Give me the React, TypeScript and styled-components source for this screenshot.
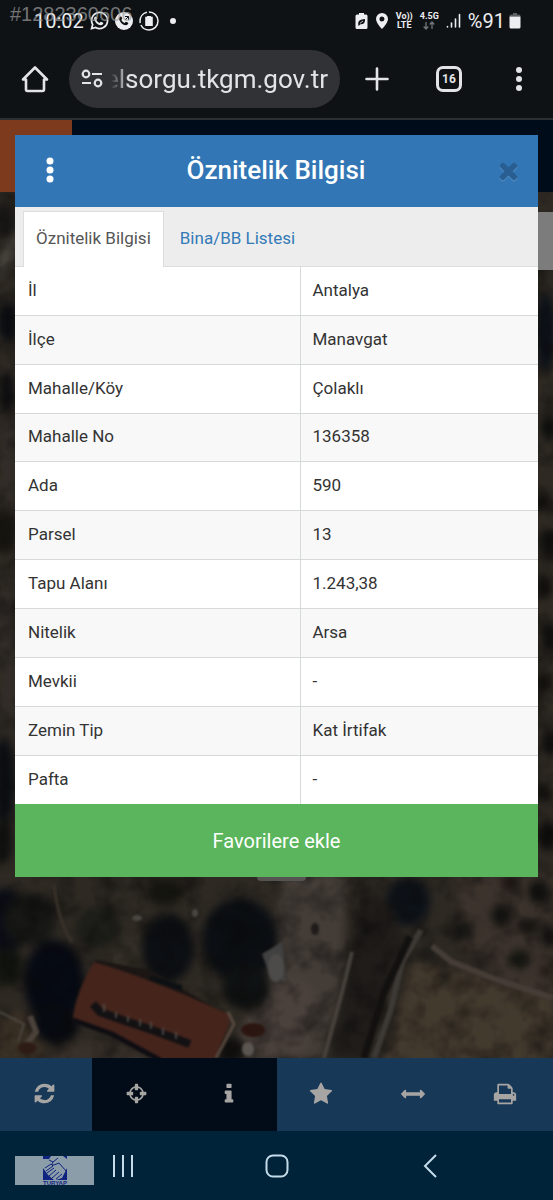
import React from "react";
import styled, { createGlobalStyle } from "styled-components";

const GlobalStyle = createGlobalStyle`
  *, *::before, *::after { box-sizing: border-box; }
  html, body { margin: 0; padding: 0; background: #0f1215; }
  body { font-family: Roboto, "Noto Sans", sans-serif; color: #333; }
  button { font: inherit; border: 0; margin: 0; padding: 0; background: none; color: inherit; cursor: pointer; }
  svg { display: block; flex: none; }
`;

const Screen = styled.div`
  display: flex;
  flex-direction: column;
  min-height: 100vh;
  position: relative;
`;

/* ---------- Phone status bar ---------- */

const StatusBar = styled.header`
  display: flex;
  align-items: center;
  justify-content: space-between;
  height: 42px;
  padding: 0 32px 0 34px;
  background: #0f1215;
  color: #eceef0;
`;

const StatusGroup = styled.div<{ $gap: number }>`
  display: flex;
  align-items: center;
  gap: ${(p) => p.$gap}px;
`;

const StatusText = styled.span`
  font-size: 20px;
  line-height: 24px;
`;

const Dot = styled.span`
  width: 6px;
  height: 6px;
  margin-left: 6px;
  border-radius: 50%;
  background: #eceef0;
`;

const NetLabel = styled.span`
  display: flex;
  flex-direction: column;
  align-items: center;
  font-size: 9px;
  line-height: 9px;
  font-weight: 700;
`;

const ListingNumber = styled.span`
  position: absolute;
  left: 10px;
  top: 3px;
  font-family: "Liberation Sans", Arial, sans-serif;
  font-size: 20px;
  line-height: 22px;
  color: rgba(160, 160, 160, 0.7);
`;

/* ---------- Browser bar ---------- */

const BrowserBar = styled.div`
  display: flex;
  align-items: center;
  height: 78px;
  padding-bottom: 2px;
  background: #0f1215;
  border-bottom: 2px solid #2b2f33;
  color: #e3e4e8;
`;

const BarButton = styled.button<{ $w: number }>`
  display: flex;
  align-items: center;
  justify-content: center;
  flex: none;
  width: ${(p) => p.$w}px;
  height: 58px;
`;

const AddressPill = styled.label`
  display: flex;
  align-items: center;
  flex: 1;
  min-width: 0;
  height: 58px;
  padding: 0 12px;
  gap: 8px;
  border-radius: 29px;
  background: #313236;
`;

const AddressInput = styled.input`
  flex: 1;
  min-width: 0;
  height: 40px;
  padding: 0;
  border: 0;
  outline: 0;
  background: none;
  color: #e3e4e8;
  font: 400 26px/32px Roboto, sans-serif;
  direction: rtl;
  mask-image: linear-gradient(to right, transparent, #000 18px);
`;

const TabCount = styled.span`
  display: flex;
  align-items: center;
  justify-content: center;
  width: 26px;
  height: 26px;
  border: 3px solid #e3e4e8;
  border-radius: 7px;
  font-size: 12px;
  line-height: 14px;
  font-weight: 700;
`;

/* ---------- Web page with dialog on top ---------- */

const WebView = styled.main`
  display: grid;
  flex: 1;
  grid-template-columns: minmax(0, 1fr);
`;

const PageLayer = styled.div`
  grid-area: 1 / 1;
  display: flex;
  flex-direction: column;
`;

const DialogLayer = styled.div`
  grid-area: 1 / 1;
  align-self: start;
  padding: 15px;
  z-index: 1;
`;

const SiteHeader = styled.div`
  height: 72px;
  background: linear-gradient(to right, #7d3a1c 72px, #010c1a 72px);
`;

const MapSvg = styled.svg`
  flex: 1 1 0;
  width: 100%;
  height: 0;
  min-height: 0;
`;

const MapToolbar = styled.nav`
  display: flex;
  height: 73px;
`;

const ToolButton = styled.button<{ $dark?: boolean }>`
  display: flex;
  align-items: center;
  justify-content: center;
  flex: 1;
  padding: 0 3px 2px 0;
  background: ${(p) => (p.$dark ? "#010c18" : "#183858")};
  color: #a6a5a3;
`;

/* ---------- Dialog ---------- */

const Dialog = styled.section`
  display: flex;
  flex-direction: column;
  background: #fff;
`;

const DialogHeader = styled.div`
  display: flex;
  align-items: center;
  justify-content: space-between;
  height: 72px;
  padding: 0 12px 2px 11px;
  background: #3276b5;
  color: #fff;
`;

const DialogTitle = styled.h1`
  margin: 0;
  font-size: 26px;
  line-height: 32px;
  font-weight: 500;
`;

const HeaderButton = styled.button`
  display: flex;
  align-items: center;
  justify-content: center;
  width: 48px;
  height: 48px;
`;

const CloseButton = styled(HeaderButton)`
  padding-left: 12px;
  color: #285e91;
  filter: drop-shadow(0 1px 0 #5c93c7);
`;

const Tabs = styled.div`
  display: flex;
  height: 60px;
  padding: 4px 8px 0;
  gap: 3px;
  background: #ededed;
  border-bottom: 1px solid #ddd;
`;

const Tab = styled.button<{ $active?: boolean }>`
  height: 56px;
  padding: 0 12px 3px;
  font-size: 17px;
  line-height: 24px;
  color: ${(p) => (p.$active ? "#555" : "#337ab7")};
  background: ${(p) => (p.$active ? "#fff" : "transparent")};
  border: 1px solid ${(p) => (p.$active ? "#ddd" : "transparent")};
  border-bottom: 0;
`;

const InfoTable = styled.table`
  width: 100%;
  height: 537px;
  table-layout: fixed;
  border-collapse: collapse;
  font-size: 17px;
  line-height: 24px;
`;

const InfoRow = styled.tr`
  &:nth-child(even) { background: #f8f8f8; }
  & + & > * { border-top: 1px solid #d5d9da; }
`;

const LabelCell = styled.th`
  width: 285px;
  padding: 0 12px 2px 13px;
  border-right: 1px solid #d5d9da;
  font-weight: 400;
  text-align: left;
`;

const ValueCell = styled.td`
  padding: 0 12px 2px;
`;

const FavouriteButton = styled.button`
  height: 73px;
  background: #5ab55c;
  color: #fff;
  font-size: 20px;
  line-height: 24px;
`;

/* ---------- Phone navigation ---------- */

const PhoneNav = styled.nav`
  display: flex;
  height: 69px;
  padding: 0 46px;
  background: #00233a;
`;

const NavButton = styled.button`
  display: flex;
  align-items: center;
  justify-content: center;
  flex: 1;
  color: #c4dcea;
`;

const BrandBadge = styled.div`
  position: absolute;
  left: 15px;
  bottom: 15px;
  width: 79px;
  height: 29px;
  display: flex;
  justify-content: center;
  background: #8b9da8;
`;

const Glyph = ({ d, size }: { d: string; size: number }) => (
  <svg width={size} height={size} viewBox="0 0 1792 1792" fill="currentColor" aria-hidden="true">
    <path d={d} />
  </svg>
);

const icons = {
  refresh:
    "M1639 1056q0 5-1 7-64 268-268 434.500t-478 166.500q-146 0-282.500-55t-243.500-157l-129 129q-19 19-45 19t-45-19-19-45v-448q0-26 19-45t45-19h448q26 0 45 19t19 45-19 45l-137 137q71 66 161 102t187 36q134 0 250-65t186-179q11-17 53-117 8-23 30-23h192q13 0 22.500 9.500t9.500 22.500zm25-800v448q0 26-19 45t-45 19h-448q-26 0-45-19t-19-45 19-45l138-138q-148-137-349-137-134 0-250 65t-186 179q-11 17-53 117-8 23-30 23h-199q-13 0-22.500-9.500t-9.500-22.500v-7q65-268 270-434.500t480-166.500q146 0 284 55.500t245 156.500l130-129q19-19 45-19t45 19 19 45z",
  crosshairs:
    "M1325 1024h-109q-26 0-45-19t-19-45v-128q0-26 19-45t45-19h109q-32-108-112.500-188.500t-188.500-112.500v109q0 26-19 45t-45 19h-128q-26 0-45-19t-19-45v-109q-108 32-188.500 112.500t-112.500 188.500h109q26 0 45 19t19 45v128q0 26-19 45t-45 19h-109q32 108 112.500 188.500t188.500 112.500v-109q0-26 19-45t45-19h128q26 0 45 19t19 45v109q108-32 188.500-112.500t112.500-188.500zm339-192v128q0 26-19 45t-45 19h-143q-37 161-154.500 278.500t-278.500 154.500v143q0 26-19 45t-45 19h-128q-26 0-45-19t-19-45v-143q-161-37-278.500-154.500t-154.500-278.500h-143q-26 0-45-19t-19-45v-128q0-26 19-45t45-19h143q37-161 154.500-278.500t278.500-154.500v-143q0-26 19-45t45-19h128q26 0 45 19t19 45v143q161 37 278.500 154.500t154.500 278.500h143q26 0 45 19t19 45z",
  info:
    "M1216 1344v128q0 26-19 45t-45 19h-512q-26 0-45-19t-19-45v-128q0-26 19-45t45-19h64v-384h-64q-26 0-45-19t-19-45v-128q0-26 19-45t45-19h384q26 0 45 19t19 45v576h64q26 0 45 19t19 45zm-128-1152v192q0 26-19 45t-45 19h-256q-26 0-45-19t-19-45v-192q0-26 19-45t45-19h256q26 0 45 19t19 45z",
  star:
    "M1728 647q0 22-26 48l-363 354 86 500q1 7 1 20 0 21-10.500 35.500t-30.500 14.500q-19 0-40-12l-449-236-449 236q-22 12-40 12-21 0-31.500-14.500t-10.500-35.500q0-6 2-20l86-500-364-354q-25-27-25-48 0-37 56-46l502-73 225-455q19-41 49-41t49 41l225 455 502 73q56 9 56 46z",
  arrows:
    "M1792 896q0 26-19 45l-256 256q-19 19-45 19t-45-19-19-45v-128h-1024v128q0 26-19 45t-45 19-45-19l-256-256q-19-19-19-45t19-45l256-256q19-19 45-19t45 19 19 45v128h1024v-128q0-26 19-45t45-19 45 19l256 256q19 19 19 45z",
  print:
    "M448 1536h896v-256h-896v256zm0-640h896v-384h-160q-40 0-68-28t-28-68v-160h-640v640zm1152 64q0-26-19-45t-45-19-45 19-19 45 19 45 45 19 45-19 19-45zm128 0v416q0 13-9.500 22.500t-22.500 9.500h-224v160q0 40-28 68t-68 28h-960q-40 0-68-28t-28-68v-160h-224q-13 0-22.500-9.500t-9.500-22.500v-416q0-79 56.500-135.500t135.500-56.500h64v-544q0-40 28-68t68-28h672q40 0 88 20t76 48l152 152q28 28 48 76t20 88v256h64q79 0 135.500 56.500t56.500 135.500z",
  times:
    "M1490 1322q0 40-28 68l-136 136q-28 28-68 28t-68-28l-294-294-294 294q-28 28-68 28t-68-28l-136-136q-28-28-28-68t28-68l294-294-294-294q-28-28-28-68t28-68l136-136q28-28 68-28t68 28l294 294 294-294q28-28 68-28t68 28l136 136q28 28 28 68t-28 68l-294 294 294 294q28 28 28 68z",
};

const tools = [
  { label: "Yenile", d: icons.refresh, size: 23 },
  { label: "Konum", d: icons.crosshairs, size: 23, dark: true },
  { label: "Bilgi", d: icons.info, size: 24, dark: true },
  { label: "Favoriler", d: icons.star, size: 24 },
  { label: "Ölçüm", d: icons.arrows, size: 24 },
  { label: "Yazdır", d: icons.print, size: 24 },
];

const rows: [string, string][] = [
  ["İl", "Antalya"],
  ["İlçe", "Manavgat"],
  ["Mahalle/Köy", "Çolaklı"],
  ["Mahalle No", "136358"],
  ["Ada", "590"],
  ["Parsel", "13"],
  ["Tapu Alanı", "1.243,38"],
  ["Nitelik", "Arsa"],
  ["Mevkii", "-"],
  ["Zemin Tip", "Kat İrtifak"],
  ["Pafta", "-"],
];

const handset =
  "M7 5.600c-.5-.2-1 0-1.300.4-1.200 1.400-.6 3 .8 4.900 1.600 2.100 3.500 3.300 5.300 3.400 1.400 0 2.600-1 2.500-2.200 0-.3-2-1.500-2.500-1.400-.5.100-.8 1.200-1.300 1.200-.8 0-3-2-3.200-2.900 0-.4.900-.8.900-1.300 0-.4-.7-2-1.200-2.100z";

const trees: [number, number, number, number, string][] = [
  [5, 730, 20, 34, "#0b0e18"], [30, 728, 26, 26, "#171815"], [98, 735, 22, 20, "#1d1e19"],
  [168, 756, 26, 34, "#0c0f13"], [240, 748, 38, 42, "#0b0f13"], [165, 700, 18, 14, "#15150f"],
  [246, 795, 24, 22, "#0f1212"], [54, 790, 30, 42, "#060a13"], [56, 832, 22, 20, "#070b12"],
  [8, 774, 14, 20, "#12140f"], [408, 710, 22, 24, "#0d1218"], [500, 723, 9, 10, "#12120f"],
  [539, 700, 11, 12, "#10100e"], [529, 734, 8, 7, "#15130f"], [549, 745, 8, 10, "#10100e"],
  [519, 767, 10, 10, "#161712"], [546, 779, 6, 6, "#18130f"], [462, 738, 12, 8, "#1e1d19"],
  [510, 690, 9, 7, "#1b1412"], [428, 762, 9, 8, "#1c1b18"], [232, 858, 14, 14, "#100f0e"],
  [7, 200, 7, 20, "#0c0d10"], [5, 340, 12, 22, "#15140f"], [4, 30, 12, 18, "#191816"],
  [4, 590, 10, 46, "#0b0f14"], [3, 650, 10, 22, "#10110f"], [8, 130, 12, 20, "#0a0c10"],
  [546, 140, 10, 40, "#0c1118"], [549, 235, 8, 12, "#0d0e0c"], [542, 310, 7, 8, "#12110e"],
  [549, 352, 9, 14, "#0e0e0c"], [544, 395, 8, 11, "#12110e"], [550, 445, 8, 15, "#0e0e0c"],
  [544, 490, 9, 10, "#12110e"], [550, 550, 8, 13, "#0e0e0c"], [543, 600, 8, 10, "#12110e"],
  [548, 645, 10, 14, "#0e0e0c"],
];

const SatelliteMap = () => (
  <MapSvg
    viewBox="0 0 553 866"
    preserveAspectRatio="xMidYMax slice"
    colorInterpolationFilters="sRGB"
    aria-hidden="true"
  >
    <defs>
      <filter id="soft" x="-10%" y="-10%" width="120%" height="120%">
        <feGaussianBlur stdDeviation="4" />
      </filter>
      <filter id="fine" x="-10%" y="-10%" width="120%" height="120%">
        <feGaussianBlur stdDeviation="1.2" />
      </filter>
      <filter id="grain" x="0" y="0" width="100%" height="100%">
        <feTurbulence type="fractalNoise" baseFrequency="0.04" numOctaves="3" seed="8" />
        <feColorMatrix values="0 0 0 0 0.03  0 0 0 0 0.03  0 0 0 0 0.03  2 0 0 0 -0.8" />
      </filter>
    </defs>
    <rect width="553" height="866" fill="#2e2923" />
    <g filter="url(#soft)">
      <path d="M285 680H345V775L322 866H250L262 800Z" fill="#433c37" />
      <path d="M268 790Q305 780 315 800L305 866H225Z" fill="#4a413c" />
      <path d="M60 850L150 850 220 880H40Z" fill="#38302a" />
      <path d="M460 680H553V810L500 790 455 750Z" fill="#3c332d" />
      <path d="M415 768L553 805V880H380Z" fill="#433a2e" />
      <path d="M0 60L15 30V60L0 90Z" fill="#4b4741" />
      <path d="M0 110H15V145H0Z" fill="#47443f" />
      <path d="M0 230H15V320H0ZM0 400H15V520H0ZM0 620L15 640V670H0Z" fill="#332d29" />
      <path d="M110 745L150 750 140 790 110 785ZM170 800L230 810 225 835 190 825Z" fill="#38332a" />
      <path d="M20 820L50 850 30 880H0V826Z" fill="#3c3226" />
    </g>
    <g filter="url(#soft)">
      {trees.map(([cx, cy, rx, ry, fill], i) => (
        <ellipse key={i} cx={cx} cy={cy} rx={rx} ry={ry} fill={fill} />
      ))}
      <path d="M365 695L393 715 402 745 384 800 365 866H332L345 790 352 740Z" fill="#1f1c19" />
    </g>
    <rect width="553" height="866" filter="url(#grain)" opacity="0.5" />
    <g filter="url(#fine)">
      <path d="M96 768L150 778 226 822 212 844 180 866 78 826 84 796Z" fill="#1b1614" />
      <path d="M94 770Q150 786 228 822Q232 828 226 840L212 872H170L112 842 73 826Q76 800 94 770Z" fill="#45241c" />
      <path d="M73 828L112 842 160 868" stroke="#0e0d12" strokeWidth="5" fill="none" />
      <path d="M150 786L182 796" stroke="#0d1013" strokeWidth="5" fill="none" />
      <path d="M93 812L100 820 128 830 152 838 190 852" stroke="#131113" strokeWidth="8" fill="none" />
      <path d="M104 812V820M116 820V826M128 824V830M140 827V834M151 830V837M163 836V843M176 840V847" stroke="#5a5552" strokeWidth="1.500" />
      <path d="M228 820L234 832 216 866" stroke="#57493f" strokeWidth="3" fill="none" />
      <path d="M262 762L282 750 286 790 270 784Z" fill="#414141" />
      <ellipse cx="276" cy="776" rx="8" ry="14" fill="#4c4b49" />
      <ellipse cx="137" cy="726" rx="5" ry="3" fill="#4a4641" />
      <ellipse cx="195" cy="721" rx="3" ry="4" fill="#4a4641" />
      <ellipse cx="253" cy="838" rx="12" ry="7" fill="#2c1611" />
      <ellipse cx="248" cy="857" rx="6" ry="7" fill="#5a5550" />
      <path d="M0 820L24 832 18 850" stroke="#49463f" strokeWidth="2" fill="none" />
      <path d="M30 824L36 840 22 858" stroke="#4b433b" strokeWidth="6" fill="none" />
      <ellipse cx="27" cy="856" rx="9" ry="6" fill="#2f1b16" />
      <path d="M72 750Q58 730 54 692" stroke="#38312a" strokeWidth="3" fill="none" />
      <path d="M421 738L402 770 390 820 374 866" stroke="#3d3935" strokeWidth="6" fill="none" />
      <path d="M352 760L342 800 324 866" stroke="#47413c" strokeWidth="4" fill="none" />
      <path d="M410 745L384 800 364 866" stroke="#12110f" strokeWidth="7" fill="none" />
      <path d="M432 754L452 770 492 786 553 806" stroke="#453d36" strokeWidth="6" fill="none" />
      <ellipse cx="315" cy="737" rx="4" ry="6" fill="#201c1a" />
    </g>
    <rect x="530" y="20" width="30" height="58" fill="#7c7c7c" />
    <path d="M257 680H306V685Q306 689 302 689H261Q257 689 257 685Z" fill="#555453" />
  </MapSvg>
);

export default function App() {
  return (
    <Screen>
      <GlobalStyle />
      <StatusBar>
        <StatusGroup $gap={5}>
          <StatusText>10:02</StatusText>
          <svg width="20" height="20" viewBox="0 0 20 20" fill="none" aria-hidden="true">
            <path d="M2.600 17.600l1.100-4A8 8 0 1 1 6.700 16.500z" stroke="#eceef0" strokeWidth="1.700" />
            <path d={handset} fill="#eceef0" />
          </svg>
          <svg width="20" height="20" viewBox="0 0 20 20" aria-hidden="true">
            <circle cx="10" cy="10" r="9" fill="#eceef0" />
            <path d={handset} fill="#0f1215" />
            <path d="M11 5.500h3.500V9M14.500 5.500L11 9" stroke="#0f1215" fill="none" />
          </svg>
          <svg width="20" height="20" viewBox="0 0 20 20" aria-hidden="true">
            <circle cx="10" cy="10" r="9" fill="none" stroke="#eceef0" strokeWidth="1.500" strokeDasharray="24 2 14 2" />
            <path d="M8 5h4v.7h1.800v9.300H6.200V5.700H8z" fill="#eceef0" />
          </svg>
          <Dot />
        </StatusGroup>
        <StatusGroup $gap={7}>
          <svg width="13" height="18" viewBox="0 0 13 18" aria-hidden="true">
            <path d="M4 1h5v1.500h2Q12.500 2.500 12.500 4v11.500Q12.500 17 11 17H2Q.5 17 .5 15.500V4Q.5 2.500 2 2.500h2z" fill="#eceef0" />
            <path d="M3.200 12Q2.500 7.500 10 7Q10.500 12.500 5.500 12.300L3.500 14z" fill="#0f1215" />
            <path d="M5 11.300L8 9" stroke="#eceef0" strokeWidth=".8" />
          </svg>
          <svg width="14" height="18" viewBox="0 0 14 18" aria-hidden="true">
            <path fillRule="evenodd" d="M7 1a6 6 0 0 1 6 6c0 4-6 10-6 10S1 11 1 7a6 6 0 0 1 6-6zm0 3.500a2.500 2.500 0 1 0 0 5 2.500 2.500 0 0 0 0-5z" fill="#eceef0" />
          </svg>
          <NetLabel>
            <span>Vo))</span>
            <span>LTE</span>
          </NetLabel>
          <NetLabel>
            <span>4.5G</span>
            <svg width="12" height="9" viewBox="0 0 12 9" fill="none" stroke="#70757a" strokeWidth="1.300" aria-hidden="true">
              <path d="M3 1v7M.7 5.500L3 8l2.300-2.500M9 8V1M6.700 3.500L9 1l2.300 2.500" />
            </svg>
          </NetLabel>
          <svg width="15" height="16" viewBox="0 0 15 16" stroke="#eceef0" strokeWidth="1.600" strokeLinecap="round" aria-hidden="true">
            <path d="M1.500 13.500v.5M5.500 10v4M9.500 6v8M13.500 1.500V14" />
          </svg>
          <StatusGroup $gap={4}>
            <StatusText>%91</StatusText>
            <svg width="12" height="18" viewBox="0 0 12 18" aria-hidden="true">
              <path d="M4 1h4v1.500h2q1.500 0 1.500 2H.5q0-2 1.500-2h2z" fill="#5c6064" />
              <path d="M.5 4.500h11V15q0 1.500-1.500 1.500H2Q.5 16.500.5 15z" fill="#eceef0" />
            </svg>
          </StatusGroup>
        </StatusGroup>
      </StatusBar>

      <BrowserBar>
        <BarButton $w={69} aria-label="Ana sayfa">
          <svg width="28" height="28" viewBox="0 0 28 28" fill="none" stroke="#e3e4e8" strokeWidth="2.600" strokeLinejoin="round" aria-hidden="true">
            <path d="M2 14.500L14 2.500 26 14.500H23V24.500Q23 26 21.500 26H6.500Q5 26 5 24.500V14.500Z" />
          </svg>
        </BarButton>
        <AddressPill>
          <svg width="22" height="20" viewBox="0 0 22 20" fill="none" stroke="#e3e4e8" strokeWidth="2.200" aria-hidden="true">
            <circle cx="5" cy="5" r="3.300" />
            <circle cx="17" cy="14" r="3.300" />
            <path d="M11 5h10M1 14h9" />
          </svg>
          <AddressInput aria-label="Adres" readOnly value="elsorgu.tkgm.gov.tr" />
        </AddressPill>
        <BarButton $w={74} aria-label="Yeni sekme">
          <svg width="24" height="24" viewBox="0 0 24 24" stroke="#e3e4e8" strokeWidth="2.600" strokeLinecap="round" aria-hidden="true">
            <path d="M12 1.500v21M1.500 12h21" />
          </svg>
        </BarButton>
        <BarButton $w={70} aria-label="Sekmeler">
          <TabCount>16</TabCount>
        </BarButton>
        <BarButton $w={69} aria-label="Menü">
          <svg width="6" height="24" viewBox="0 0 6 24" fill="#e3e4e8" aria-hidden="true">
            <circle cx="3" cy="3" r="3" />
            <circle cx="3" cy="12" r="3" />
            <circle cx="3" cy="21" r="3" />
          </svg>
        </BarButton>
      </BrowserBar>

      <WebView>
        <PageLayer>
          <SiteHeader />
          <SatelliteMap />
          <MapToolbar>
            {tools.map((t) => (
              <ToolButton key={t.label} aria-label={t.label} $dark={t.dark}>
                <Glyph d={t.d} size={t.size} />
              </ToolButton>
            ))}
          </MapToolbar>
        </PageLayer>
        <DialogLayer>
          <Dialog role="dialog" aria-labelledby="dialog-title">
            <DialogHeader>
              <HeaderButton aria-label="Seçenekler">
                <svg width="8" height="26" viewBox="0 0 8 26" fill="#fff" aria-hidden="true">
                  <circle cx="4" cy="4" r="3.500" />
                  <circle cx="4" cy="13" r="3.500" />
                  <circle cx="4" cy="22" r="3.500" />
                </svg>
              </HeaderButton>
              <DialogTitle id="dialog-title">Öznitelik Bilgisi</DialogTitle>
              <CloseButton aria-label="Kapat">
                <Glyph d={icons.times} size={27} />
              </CloseButton>
            </DialogHeader>
            <Tabs role="tablist">
              <Tab role="tab" aria-selected="true" $active>Öznitelik Bilgisi</Tab>
              <Tab role="tab" aria-selected="false">Bina/BB Listesi</Tab>
            </Tabs>
            <InfoTable>
              <tbody>
                {rows.map(([label, value]) => (
                  <InfoRow key={label}>
                    <LabelCell scope="row">{label}</LabelCell>
                    <ValueCell>{value}</ValueCell>
                  </InfoRow>
                ))}
              </tbody>
            </InfoTable>
            <FavouriteButton>Favorilere ekle</FavouriteButton>
          </Dialog>
        </DialogLayer>
      </WebView>

      <PhoneNav>
        <NavButton aria-label="Son uygulamalar">
          <svg width="22" height="22" viewBox="0 0 22 22" stroke="currentColor" strokeWidth="2" aria-hidden="true">
            <path d="M2 0v22M11 0v22M20 0v22" />
          </svg>
        </NavButton>
        <NavButton aria-label="Ana ekran">
          <svg width="24" height="24" viewBox="0 0 24 24" fill="none" stroke="currentColor" strokeWidth="2" aria-hidden="true">
            <rect x="1.500" y="1.500" width="21" height="21" rx="6.500" />
          </svg>
        </NavButton>
        <NavButton aria-label="Geri">
          <svg width="14" height="24" viewBox="0 0 14 24" fill="none" stroke="currentColor" strokeWidth="2" aria-hidden="true">
            <path d="M13 1L2 12 13 23" />
          </svg>
        </NavButton>
      </PhoneNav>

      <ListingNumber>#1282360606</ListingNumber>
      <BrandBadge>
        <svg width="26" height="29" viewBox="0 0 26 29" aria-label="TURYAP" role="img">
          <path d="M1 0H9L7 3H1ZM21 0H25V3ZM1 12L6 19 12 24H1ZM25 12V24H14L20 22Z" fill="#0f2380" />
          <path d="M7 4L11 6 16 2M11 6Q9 9 12 9L17 7 24 15M3 12L9 8 11 10 4 15M5 17L12 12M7 20L14 14M10 22L17 16M14 23L20 18" fill="none" stroke="#0f2380" strokeWidth="1" />
          <text x="13" y="29" textAnchor="middle" fontFamily="Liberation Sans, sans-serif" fontWeight="700" fontSize="6" fill="#0f2380">TURYAP</text>
        </svg>
      </BrandBadge>
    </Screen>
  );
}
